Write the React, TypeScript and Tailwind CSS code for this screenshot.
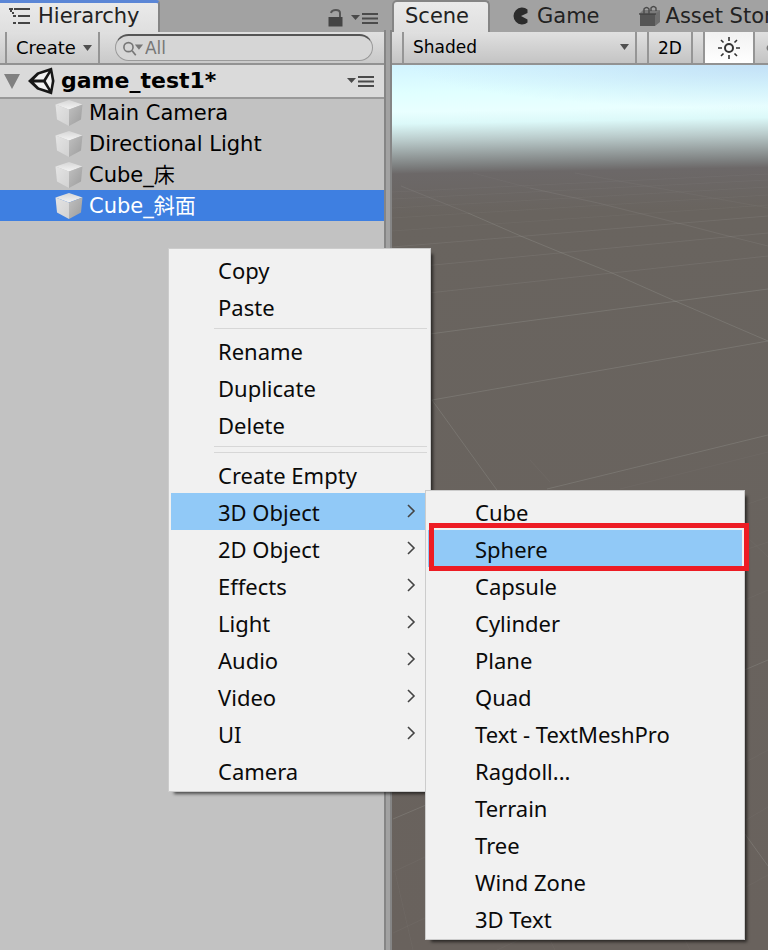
import React from "react";

const MENU_FONT = "font-['Noto_Sans',sans-serif]";

type Item = { label: string; arrow?: boolean; active?: boolean };

const editItems: Item[] = [{ label: "Copy" }, { label: "Paste" }];
const manageItems: Item[] = [{ label: "Rename" }, { label: "Duplicate" }, { label: "Delete" }];
const createItems: Item[] = [
  { label: "Create Empty" },
  { label: "3D Object", arrow: true, active: true },
  { label: "2D Object", arrow: true },
  { label: "Effects", arrow: true },
  { label: "Light", arrow: true },
  { label: "Audio", arrow: true },
  { label: "Video", arrow: true },
  { label: "UI", arrow: true },
  { label: "Camera" },
];
const objectItems: Item[] = [
  { label: "Cube" },
  { label: "Sphere", active: true },
  { label: "Capsule" },
  { label: "Cylinder" },
  { label: "Plane" },
  { label: "Quad" },
  { label: "Text - TextMeshPro" },
  { label: "Ragdoll..." },
  { label: "Terrain" },
  { label: "Tree" },
  { label: "Wind Zone" },
  { label: "3D Text" },
];
const objects = [
  { name: "Main Camera" },
  { name: "Directional Light" },
  { name: "Cube_床" },
  { name: "Cube_斜面", selected: true },
];

function MenuItems({ items }: { items: Item[] }) {
  return (
    <>
      {items.map((item) => (
        <button
          key={item.label}
          role="menuitem"
          className={`flex h-[37px] w-full items-center justify-between pr-3 pl-[47px] text-left text-[22px] leading-[36px] whitespace-nowrap text-[#0a0a0a] ${item.active ? "bg-[#91c9f7]" : ""}`}
        >
          {item.label}
          {item.arrow && (
            <svg width="9" height="16" viewBox="0 0 9 16" fill="none" stroke="#444" strokeWidth="1.6" aria-hidden="true">
              <path d="M1 1l6 6-6 6" />
            </svg>
          )}
        </button>
      ))}
    </>
  );
}

function Caret() {
  return (
    <svg width="9" height="6" viewBox="0 0 9 6" fill="#4f4f4f" aria-hidden="true">
      <path d="M0 0h9L4.5 6z" />
    </svg>
  );
}

function OptionsIcon() {
  return (
    <svg width="28" height="12" viewBox="0 0 28 12" aria-hidden="true">
      <path d="M0 3h9L4.5 8z" fill="#4a4a4a" />
      <path d="M11 2h16M11 6.500h16M11 11h16" stroke="#4a4a4a" strokeWidth="1.8" />
    </svg>
  );
}

function CubeIcon() {
  return (
    <svg width="28" height="28" viewBox="0 0 28 28" aria-hidden="true">
      <defs>
        <linearGradient id="cubeTop" x1="0" y1="0" x2="0" y2="1">
          <stop offset="0" stopColor="#d6d6d6" />
          <stop offset="1" stopColor="#f4f4f4" />
        </linearGradient>
        <linearGradient id="cubeLeft" x1="0" y1="0" x2="1" y2="1">
          <stop offset="0" stopColor="#e4e4e4" />
          <stop offset="1" stopColor="#d2d2d2" />
        </linearGradient>
        <linearGradient id="cubeRight" x1="0" y1="0" x2="1" y2="1">
          <stop offset="0" stopColor="#c0c0c0" />
          <stop offset="1" stopColor="#9c9c9c" />
        </linearGradient>
      </defs>
      <path d="M14 1L27.5 5.5 14 10.5 0.5 5.5z" fill="url(#cubeTop)" />
      <path d="M0.5 5.5L14 10.5V27L2 20.5z" fill="url(#cubeLeft)" />
      <path d="M27.5 5.5L14 10.5V27L26 20.5z" fill="url(#cubeRight)" />
    </svg>
  );
}

function UnityIcon() {
  return (
    <svg width="28" height="28" viewBox="0 0 28 28" aria-hidden="true">
      <path d="M0 14L9 5.500 24 0.500 26.500 14 24 27.500 9 22.500z" fill="#161616" />
      <path d="M6 12.500L11 7.500 20.500 4.500 15.500 12.500z" fill="#f2f2f2" />
      <path d="M6 15.500L11 20.500 20.500 23.500 15.500 15.500z" fill="#f2f2f2" />
      <path d="M22.500 6L23.800 14 22.500 22 17.800 14z" fill="#f2f2f2" />
    </svg>
  );
}

function Hierarchy() {
  return (
    <section aria-label="Hierarchy" className="flex w-1/2 shrink-0 flex-col bg-[#c2c2c2]">
      <header className="flex h-8 items-center justify-between bg-[#a2a2a2] pr-[5px]">
        <button className="flex h-8 w-[160px] items-start gap-[6px] rounded-tr-[4px] border-t-[3px] border-r-2 border-t-[#5b86d6] border-r-[#858585] bg-linear-to-b from-[#eaeaea] to-[#dfdfdf] pl-2 text-[21px] leading-[26px] text-[#222]">
          <svg className="mt-1" width="24" height="18" viewBox="0 0 24 18" fill="none" stroke="#444" strokeWidth="2" aria-hidden="true">
            <path d="M1 2h4M6 2h16M10 9h12M10 16h12" />
            <path d="M3 3v2M5 9h3M5 16h3M5 5v2" />
          </svg>
          Hierarchy
        </button>
        <div className="flex items-center gap-2 pt-1">
          <svg width="15" height="18" viewBox="0 0 15 18" aria-hidden="true">
            <path d="M0.5 8h14v9.5h-14z" fill="#444" />
            <path d="M3 4c1-4 9-4 9 0v4" fill="none" stroke="#555" strokeWidth="2" />
          </svg>
          <OptionsIcon />
        </div>
      </header>
      <div className="flex h-[33px] items-center border-b-2 border-[#929292] bg-linear-to-b from-[#e0e0e0] to-[#c9c9c9] pl-[5px]">
        <button className="flex h-full w-[95px] items-center justify-between border-x-2 border-[#959595] pr-[6px] pl-[9px] text-[18px] leading-8">
          Create <Caret />
        </button>
        <label className="mr-[11px] ml-[15px] flex h-[27px] flex-1 items-center rounded-full border border-t-2 border-[#9a9a9a] border-t-[#555] bg-[#d6d6d6] pl-[7px]">
          <svg width="24" height="17" viewBox="0 0 24 17" fill="none" stroke="#777" strokeWidth="1.8" aria-hidden="true">
            <circle cx="6" cy="7" r="5" />
            <path d="M10 11l4 5" />
            <path d="M13 4h9l-4.5 6z" fill="#777" stroke="none" />
          </svg>
          <input
            aria-label="Search"
            placeholder="All"
            className="mb-px w-full min-w-0 bg-transparent text-[17px] leading-[22px] outline-none placeholder:text-[#777]"
          />
        </label>
      </div>
      <div className="flex h-8 items-center bg-[#dadada] pr-[9px] pl-1 shadow-[0_2px_0_#999]">
        <svg width="16" height="15" viewBox="0 0 16 15" fill="#808080" aria-hidden="true">
          <path d="M0 0h16L8 15z" />
        </svg>
        <span className="ml-2">
          <UnityIcon />
        </span>
        <h1 className="ml-[5px] flex-1 text-[22px] leading-7 font-bold">game_test1*</h1>
        <OptionsIcon />
      </div>
      <ul>
        {objects.map((o) => (
          <li
            key={o.name}
            className={`flex h-[31px] items-center gap-[6px] pl-[55px] text-[21px] leading-7 ${o.selected ? "bg-[#3e7fe1] text-white" : ""}`}
          >
            <CubeIcon />
            {o.name}
          </li>
        ))}
      </ul>
    </section>
  );
}

/* Ground-plane grid, drawn in window coordinates and shifted into the viewport. */
function GroundGrid() {
  return (
    <svg className="h-full w-full" aria-hidden="true">
      <g transform="translate(-392 -65)" fill="none" stroke="#c4c8c6">
        <g strokeOpacity="0.17">
          <path d="M432 400L768 341M432 400L768 866M547 489L768 435M393 819L768 660" />
          <path d="M392 339L768 289M468 213L523 237 562 253 612 273 675 301 768 341" />
        </g>
        <g strokeOpacity="0.1">
          <path d="M392 297L768 256M392 269L768 233M392 247L768 216M401 186L468 213" />
          <path d="M530 188L598 203 678 223 732 237 768 246" />
        </g>
        <g strokeOpacity="0.05">
          <path d="M392 231L768 205M392 218L768 195M392 208L768 187M392 199L768 180M392 192L768 174" />
          <path d="M473 173L530 188M575 173L652 187 752 205 768 208M393 872L425 857M393 933L425 918M395 872L413 950" />
          <path d="M746 762L768 750M746 820L768 807M746 887L768 875M497 950L523 938M545 930L555 950M680 930L690 950" />
          <path d="M745 505L768 497M745 550L768 542M745 600L768 590M620 489L768 452M530 460L550 482M745 535L768 557" />
        </g>
      </g>
    </svg>
  );
}

function Scene() {
  return (
    <section aria-label="Scene" className="flex min-w-0 flex-1 flex-col overflow-hidden">
      <header className="flex h-8 items-center bg-[#a2a2a2] text-[21px] leading-7 whitespace-nowrap text-[#222]">
        <button className="h-8 w-[98px] shrink-0 rounded-t-[5px] border-x-2 border-t-2 border-[#858585] bg-linear-to-b from-[#eaeaea] to-[#dfdfdf] pb-[2px] pl-[11px] text-left">
          Scene
        </button>
        <button className="ml-[21px] flex shrink-0 items-center gap-[7px]">
          <svg width="19" height="19" viewBox="0 0 19 19" fill="#2c2c2c" aria-hidden="true">
            <path d="M16.5 2.500A8.500 8.500 0 1 0 16.500 15.500V12.500L10 9 16.500 6z" />
          </svg>
          Game
        </button>
        <button className="ml-[39px] flex shrink-0 items-center gap-[5px]">
          <svg width="22" height="22" viewBox="0 0 22 22" aria-hidden="true">
            <path d="M0 9l4-4h17l-4 4z" fill="#7a7a7a" />
            <path d="M1 9h15v12H1z" fill="#555" />
            <path d="M16 9l5-4v12l-5 4z" fill="#6e6e6e" />
            <path d="M0 9h17" stroke="#3c3c3c" strokeWidth="1.2" />
            <path d="M5 9V4q2.500-3 5 0v5M12 6V3q2.500-3 5 0v3" fill="none" stroke="#4a4a4a" strokeWidth="1.400" />
          </svg>
          Asset Store
        </button>
      </header>
      <div className="flex h-[33px] shrink-0 items-center border-b-2 border-[#929292] bg-linear-to-b from-[#e0e0e0] to-[#c4c4c4] pl-[10px] text-[17px]">
        <label className="relative flex h-full w-[235px] shrink-0 items-center border-x-2 border-[#959595]">
          <select aria-label="Draw mode" className="w-full appearance-none bg-transparent pl-[9px] text-[17px] outline-none">
            <option>Shaded</option>
          </select>
          <span className="pointer-events-none absolute top-3 right-[6px]">
            <Caret />
          </span>
        </label>
        <button className="ml-[10px] h-full w-[46px] shrink-0 border-x-2 border-[#959595] leading-8">2D</button>
        <button aria-label="Scene lighting" className="ml-[10px] flex h-full w-[52px] shrink-0 items-center justify-center border-x-2 border-[#959595] bg-linear-to-b from-[#f2f2f2] to-white">
          <svg width="22" height="22" viewBox="0 0 22 22" fill="none" stroke="#333" strokeWidth="2" aria-hidden="true">
            <circle cx="11" cy="11" r="4" />
            <path d="M11 0v4M11 18v4M0 11h4M18 11h4M3 3l2.5 2.5M16.5 16.5L19 19M19 3l-2.5 2.5M5.5 16.5L3 19" strokeWidth="1.6" />
          </svg>
        </button>
        <button aria-label="Scene audio" className="ml-[10px] shrink-0">
          <svg width="18" height="16" viewBox="0 0 18 16" fill="#777" aria-hidden="true">
            <path d="M3 5L8 0v16l-5-5Q0 8 3 5z" />
          </svg>
        </button>
      </div>
      <div className="flex-1 bg-[linear-gradient(179deg,#d2f4ff_0px,#e0ffff_28px,#e9ffff_47px,#dcf9f9_59px,#b9caca_76px,#959d9d_91px,#7b7d7d_102px,#6c6868_109px,#69645f_150px,#69625d_100%)]">
        <div className="h-full bg-[radial-gradient(ellipse_360px_44px_at_100%_0,#bfdcf5cc,transparent)]">
          <GroundGrid />
        </div>
      </div>
    </section>
  );
}

export default function App() {
  return (
    <main className="relative flex h-screen overflow-hidden bg-[#a2a2a2] font-['DejaVu_Sans','Noto_Sans_CJK_JP',sans-serif] text-black">
      <Hierarchy />
      <div className="mt-[30px] w-2 shrink-0 border-x-2 border-[#858585] bg-[#a2a2a2]" />
      <Scene />

      <div role="menu" aria-label="Object actions" className={`absolute top-[248px] left-[168px] w-[263px] border border-[#ccc] bg-[#f1f1f1] p-[2px] shadow-[4px_4px_3px_-2px_rgba(0,0,0,0.6)] ${MENU_FONT}`}>
        <MenuItems items={editItems} />
        <div role="separator" className="mr-px ml-[43px] flex h-[7px] flex-col justify-center">
          <span className="h-px bg-[#d7d7d7]" />
        </div>
        <MenuItems items={manageItems} />
        <div role="separator" className="mr-px ml-[43px] flex h-[13px] flex-col justify-center gap-[5px]">
          <span className="h-px bg-[#d7d7d7]" />
          <span className="h-px bg-[#d7d7d7]" />
        </div>
        <MenuItems items={createItems} />
      </div>

      <div role="menu" aria-label="3D Object" className={`absolute top-[490px] left-[425px] w-[320px] border border-[#ccc] bg-[#f1f1f1] p-[2px] shadow-[4px_4px_3px_-2px_rgba(0,0,0,0.6)] ${MENU_FONT}`}>
        <MenuItems items={objectItems} />
      </div>
      <div className="pointer-events-none absolute top-[523px] left-[429px] h-12 w-[320px] border-[5px] border-[#ed1c24]" />
    </main>
  );
}
